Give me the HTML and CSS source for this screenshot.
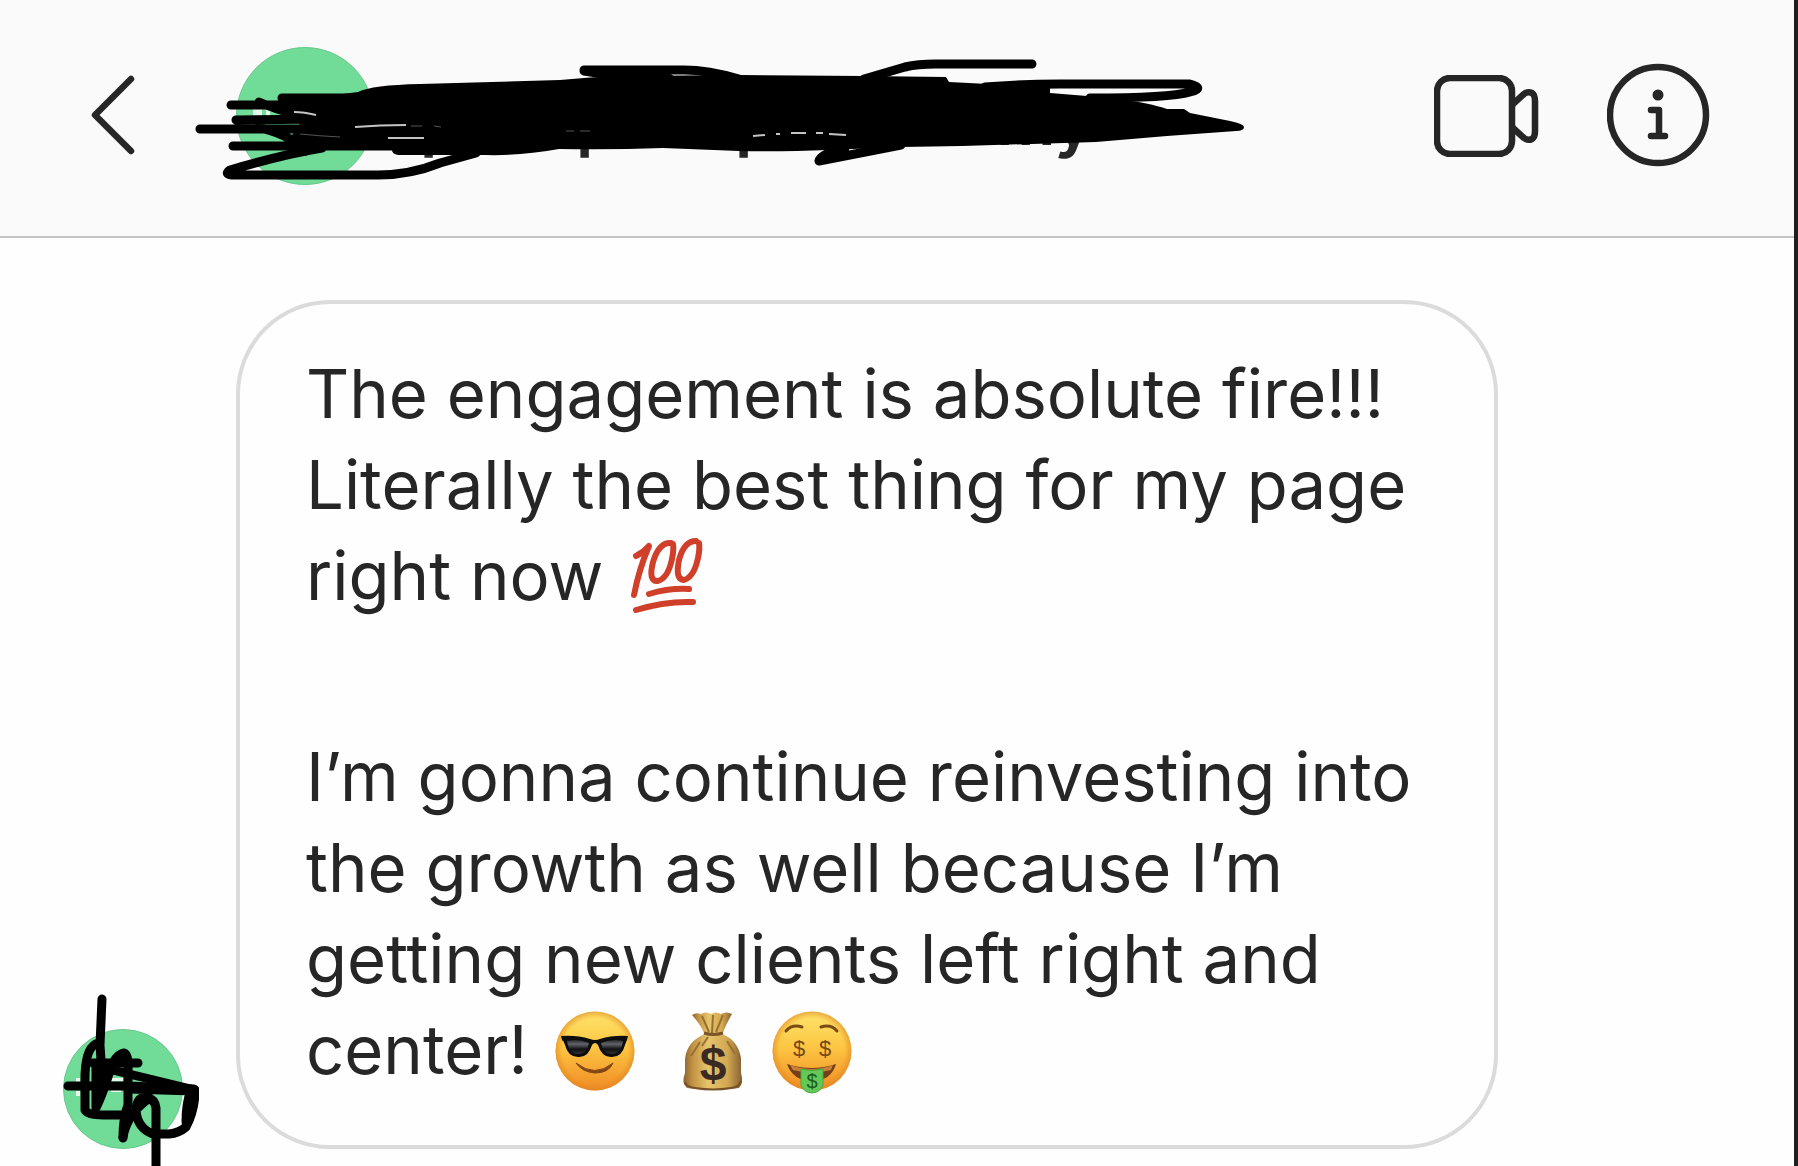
FILE: index.html
```html
<!DOCTYPE html>
<html lang="en">
<head>
    <meta charset="UTF-8">
    <meta name="viewport" content="width=device-width, initial-scale=1">
    <title>Direct message</title>
    <link rel="stylesheet" href="styles.css">
</head>
<body>
    <header class="topbar">
        <button class="icon-button" aria-label="Back">
            <svg class="icon" width="46" height="82" viewBox="0 0 46 82">
                <path d="M41 4 L5 40 L41 76"/>
            </svg>
        </button>
        <div class="avatar avatar-large"></div>

        <div class="actions">
            <button class="icon-button" aria-label="Video call">
                <svg class="icon" width="106" height="82" viewBox="0 0 106 82">
                    <rect x="3" y="3" width="75" height="76" rx="13"/>
                    <path d="M79 29 L90 19 Q94 16 98 18 Q101 20 101 26 V56 Q101 62 98 64 Q94 66 90 63 L79 53"/>
                </svg>
            </button>
            <button class="icon-button" aria-label="Details">
                <svg class="icon" width="103" height="106" viewBox="0 0 103 106">
                    <circle cx="51" cy="52" r="48"/>
                    <circle class="icon-dot" cx="51" cy="32" r="5.500"/>
                    <path d="M44 47 H52 V73 M44 73 H58"/>
                </svg>
            </button>
        </div>

        <!-- Account name, crossed out -->
        <svg class="scribble scribble-name" width="1260" height="200" viewBox="0 0 1260 200" aria-hidden="true">
            <g class="letters">
                <path d="M253 109 h9 v10 h-9 z M266 109 h4 v10 h-4 z"/>
            </g>
            <text class="account-name" x="420" y="144">p</text>
            <text class="account-name" x="576" y="144">p</text>
            <text class="account-name" x="735" y="144">p</text>
            <text class="account-name" x="996" y="145">my</text>
            <path class="ink-fill" d="M358 92 Q372 85 420 84 Q490 82 560 80 Q590 77 620 76 L740 75 L864 76 L946 77 L949 82 L988 84 L1050 81 V93 L1087 96 L1118 99 Q1150 103 1167 109 L1184 109 L1190 113 L1230 121 Q1244 124 1244 127 Q1244 131 1236 131 L1167 136 L1096 142 L962 146 L901 147 L828 150 Q780 152 739 151 L663 148 Q610 150 559 149 Q520 156 486 155 L398 155 Q392 154 392 150 L318 150 L290 138 L300 124 L290 118 L280 102 Z"/>
            <path d="M231 105 L300 105 M282 98 L400 98 M259 102 Q290 116 340 122 M236 120 L330 119 M200 129 L430 129 M233 146 L430 146 M250 126 Q285 131 306 151"/>
            <path d="M322 148 Q285 154 230 170 Q223 175 235 175 L378 175 Q410 175 440 163 L476 153"/>
            <path d="M584 70 L684 70 Q708 70 739 79 M584 71 Q630 79 670 79"/>
            <path d="M864 79 L905 67 Q918 64 935 64 L1032 64"/>
            <path d="M985 87 Q1020 84 1060 84 L1189 84 Q1206 88 1190 92 Q1170 98 1090 98"/>
            <path d="M901 145 L819 161 Q820 154 845 148"/>
            <path class="gap" d="M355 127 Q380 125 406 125 M388 138 H424 M294 112 Q304 112 316 115"/>
            <path class="gap gap-faint" d="M411 126 H422 M434 126 L441 127 M300 134 Q320 136 340 137 M566 131 H574 M580 131 H590"/>
            <path class="gap" d="M753 136 L765 135 M776 134 H780 M791 133 H806 M816 133 H823 M829 134 L846 135"/>
        </svg>
    </header>

    <main class="thread">
        <div class="sender">
            <div class="avatar avatar-small"></div>
            <svg class="scribble scribble-avatar" width="150" height="176" viewBox="0 0 150 176" aria-hidden="true">
                <g class="letters">
                    <path d="M27 88 h4 v5 h-4 z M27 101 h4 v5 h-4 z M62 88 h12 v3 h-12 z M62 100 h10 v2 h-10 z M110 88 h4 v2 h-4 z"/>
                </g>
                <path d="M53 9 L51 55 L54 100 M49 53 Q37 56 36 85 V120 Q39 125 54 125 H75"/>
                <path d="M19 96 L80 96 L145 99 M44 73 H89 M47 74 V118 Q53 106 60 84 Q65 65 75 63 Q80 65 79 80 V115 Q74 127 74 148"/>
                <path d="M47 76 L146 100 M80 99 L145 101 M146 100 Q146 120 137 137 Q130 143 120 144 H104 Q88 138 87 120 Q88 107 97 107 Q106 109 107 118 V180 M74 147 Q78 125 98 110 M142 101 Q137 112 137 132"/>
            </svg>
        </div>

        <div class="bubble">
            <p>
                The engagement is absolute fire!!! Literally the best thing for my page right now
                <svg class="emoji" viewBox="3 0 80 80" role="img" aria-label="100">
                    <g class="hundred">
                        <path d="M9 19 Q17 15 22 9 Q12 32 7 58"/>
                        <path d="M44 6 Q32 5 26 25 Q21 45 31 44 Q41 41 45 22 Q47 12 46 7"/>
                        <path d="M69 4 Q57 4 52 23 Q48 43 57 43 Q67 40 71 21 Q73 12 72 6"/>
                        <path d="M22 57 Q42 51 62 52 M9 73 Q38 64 66 65"/>
                    </g>
                </svg>
            </p>
            <p>
                I’m gonna continue reinvesting into the growth as well because I’m getting new clients left right and center!
                <svg class="emoji" viewBox="0 0 80 80" role="img" aria-label="Smiling face with sunglasses">
                    <defs>
                        <linearGradient id="skin" x1="0" y1="0" x2="0" y2="1">
                            <stop offset="0" stop-color="#fde46b"/>
                            <stop offset="0.45" stop-color="#fdc643"/>
                            <stop offset="1" stop-color="#f08b25"/>
                        </linearGradient>
                        <radialGradient id="shade">
                            <stop offset="0.82" stop-color="#e88a20" stop-opacity="0"/>
                            <stop offset="1" stop-color="#dc8422" stop-opacity="0.6"/>
                        </radialGradient>
                        <linearGradient id="lens" x1="0" y1="0" x2="0" y2="1">
                            <stop offset="0" stop-color="#26262a"/>
                            <stop offset="0.3" stop-color="#62646a"/>
                            <stop offset="0.65" stop-color="#111113"/>
                            <stop offset="1" stop-color="#303034"/>
                        </linearGradient>
                    </defs>
                    <circle cx="40" cy="40" r="39.500" fill="url(#skin)"/>
                    <circle cx="40" cy="40" r="39.500" fill="url(#shade)"/>
                    <path d="M6 25 Q22 24 35 28 Q40 30 45 28 Q58 24 73 25 L72 29 Q71 31 70 34 Q67 46 57 46 Q47 47 43 34 Q40 30 37 34 Q33 47 23 46 Q13 46 10 34 Q9 30 7 29 Z" fill="#0d0d0e"/>
                    <path d="M12 30 Q23 27 34 32 Q32 44 23 43 Q14 43 12 30 Z M46 32 Q57 27 68 30 Q66 43 57 43 Q48 44 46 32 Z" fill="url(#lens)"/>
                    <path d="M21 52 Q40 67 58 52 Q54 62 40 62 Q27 61 21 52 Z" fill="#824515" stroke="#824515" stroke-linejoin="round"/>
                </svg>
                <svg class="emoji emoji-bag" viewBox="0 0 80 80" role="img" aria-label="Money bag">
                    <defs>
                        <linearGradient id="sack" x1="0" y1="0" x2="1" y2="0">
                            <stop offset="0" stop-color="#8a6230"/>
                            <stop offset="0.16" stop-color="#c29343"/>
                            <stop offset="0.42" stop-color="#e6c46d"/>
                            <stop offset="0.75" stop-color="#d3a850"/>
                            <stop offset="1" stop-color="#856034"/>
                        </linearGradient>
                    </defs>
                    <path d="M19 4 Q23 1 28 3 Q33 0 38 3 Q43 0 48 3 Q53 0 59 3 Q53 13 49 24 H32 Q28 14 19 4 Z" fill="url(#sack)"/>
                    <path d="M32 23 H49 Q65 29 68 47 V62 Q71 72 66 77 Q40 81 14 77 Q8 72 12 62 V48 Q14 30 32 23 Z" fill="url(#sack)"/>
                    <path d="M29 5 L36 21 M40 4 L39 22 M50 4 L43 21 M27 31 L18 45 M54 30 L62 43 M35 26 L29 35" fill="none" stroke="#98702f" stroke-width="2"/>
                    <path d="M31 22 Q40 25 50 22" fill="none" stroke="#7c5429" stroke-width="3"/>
                    <path d="M12 71 Q13 76 22 77 Q40 80 58 77 Q67 76 68 70" fill="none" stroke="#765027" stroke-width="2"/>
                    <text class="dollar-bag" x="40" y="69">$</text>
                </svg>
                <svg class="emoji" viewBox="0 0 80 80" role="img" aria-label="Money-mouth face">
                    <circle cx="40" cy="40" r="39.500" fill="url(#skin)"/>
                    <circle cx="40" cy="40" r="39.500" fill="url(#shade)"/>
                    <path d="M14 20 Q20 13 30 16 M49 16 Q59 13 65 20" fill="none" stroke="#7b4b14" stroke-width="3" stroke-linecap="round"/>
                    <text class="dollar-eye" x="27" y="45">$</text>
                    <text class="dollar-eye" x="53" y="45">$</text>
                    <path d="M15 53 Q40 61 64 53 Q59 70 40 70 Q21 70 15 53 Z" fill="#763e18"/>
                    <path d="M18 54 Q40 62 61 54 L59 59 Q40 64 21 59 Z" fill="#c9803a"/>
                    <path d="M29 58 Q40 61 51 58 V74 Q49 81 40 82 Q31 81 29 74 Z" fill="#65c957" stroke="#43a943"/>
                    <text class="dollar-tongue" x="40" y="77">$</text>
                </svg>
            </p>
        </div>
    </main>
</body>
</html>
```

FILE: styles.css
```css
* {
    box-sizing: border-box;
}
body {
    margin: 0;
    min-height: 100vh;
    background-color: #fefefe;
    border-right: 4px solid #1f1f1f;
    color: #262626;
    font-family: Inter, "Liberation Sans", sans-serif;
}

/* Header */
.topbar {
    position: relative;
    display: flex;
    align-items: center;
    padding: 47px 84px 51px 90px;
    background-color: #fafafa;
    border-bottom: 2px solid #c4c4c4;
}
.icon-button {
    display: block;
    padding: 0;
    background: none;
    border: none;
    cursor: pointer;
}
.icon {
    display: block;
    fill: none;
    stroke: #262626;
    stroke-width: 6.5px;
    stroke-linecap: round;
    stroke-linejoin: round;
}
.icon-dot {
    fill: #262626;
    stroke: none;
}
.actions {
    display: flex;
    align-items: center;
    gap: 67px;
    margin-left: auto;
}
.avatar {
    background-color: #70dc98;
    border: 1px solid #69c78c;
    border-radius: 50%;
}
.avatar-large {
    width: 138px;
    height: 138px;
    margin-left: 100px;
}
.avatar-small {
    width: 120px;
    height: 120px;
}

/* Pen marks over the avatars and the name */
.scribble {
    position: absolute;
    fill: none;
    stroke: #000;
    stroke-width: 9px;
    stroke-linecap: round;
    stroke-linejoin: round;
    pointer-events: none;
}
.scribble-name {
    top: 0;
    left: 0;
}
.scribble-avatar {
    bottom: -17px;
    left: -14px;
}
.scribble .ink-fill {
    fill: #000;
    stroke: none;
}
.scribble .gap {
    stroke: #c4c4c4;
    stroke-width: 2px;
    stroke-linecap: butt;
}
.scribble .gap-faint {
    stroke: #555;
    stroke-width: 1px;
}
.letters {
    fill: #e8f7ed;
    stroke: none;
}
.account-name {
    fill: #262626;
    stroke: none;
    font-size: 66px;
    font-weight: 600;
}

/* Messages */
.thread {
    display: flex;
    align-items: flex-end;
    gap: 53px;
    padding: 62px 296px 17px 63px;
}
.sender {
    position: relative;
    flex: none;
}
.bubble {
    flex: 1;
    padding: 44px 60px 50px 66px;
    border: 4px solid #dbdbdb;
    border-radius: 94px;
    font-size: 67px;
    line-height: 91px;
}
.bubble p {
    margin: 0;
}
.bubble p + p {
    margin-top: 110px;
}
.emoji {
    width: 80px;
    height: 80px;
    margin-left: 8px;
    vertical-align: -17px;
    overflow: visible;
}
.emoji-bag {
    margin-left: 20px;
}
.emoji-bag + .emoji {
    margin-left: 0;
}
.hundred {
    fill: none;
    stroke: #d03f2a;
    stroke-width: 6px;
    stroke-linecap: round;
    stroke-linejoin: round;
}
.dollar-bag,
.dollar-eye,
.dollar-tongue {
    font-family: "Liberation Sans", sans-serif;
    text-anchor: middle;
}
.dollar-bag {
    fill: #3a2a22;
    font-size: 48px;
    font-weight: 700;
}
.dollar-eye {
    fill: #774817;
    font-size: 22px;
}
.dollar-tongue {
    fill: #1d5c20;
    font-size: 20px;
}
```
